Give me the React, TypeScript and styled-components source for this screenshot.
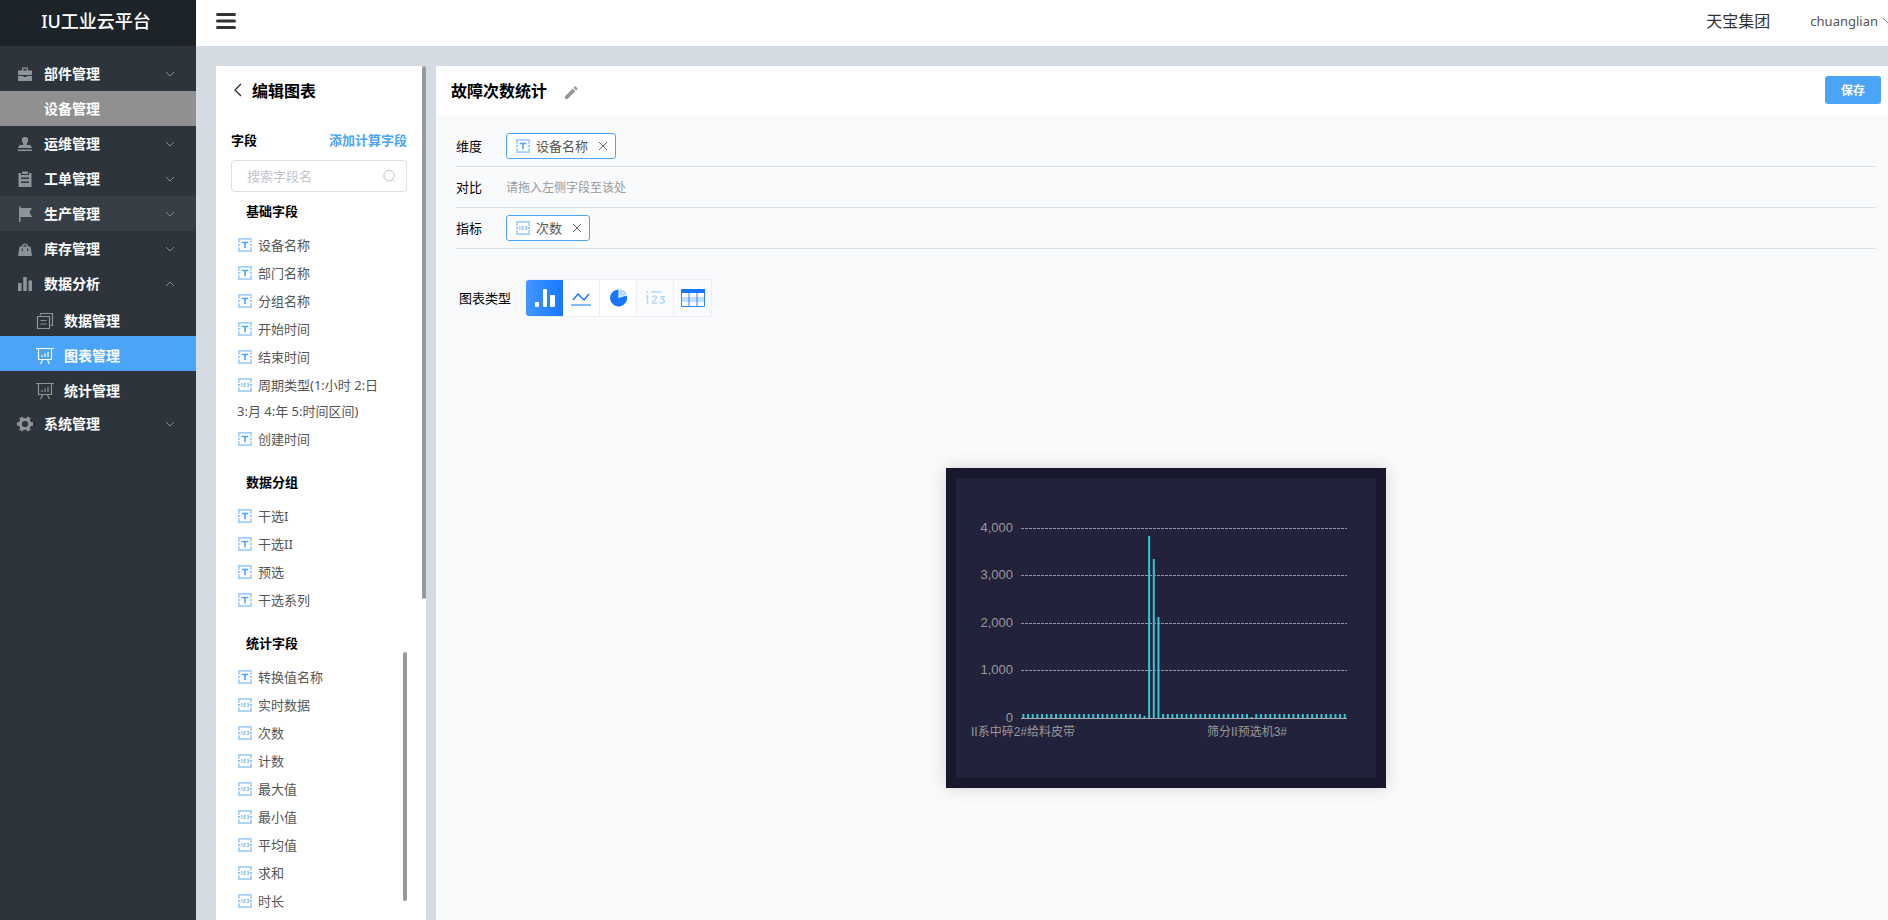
import React from "react";
import styled, { createGlobalStyle, css } from "styled-components";

const Global = createGlobalStyle`
  *, *::before, *::after { box-sizing: border-box; }
  html, body, #root { height: 100%; }
  body {
    margin: 0;
    font-family: "Noto Sans", "Noto Sans CJK SC", sans-serif;
    font-size: 13px;
    color: #333;
    background: #d4dbe3;
    overflow: hidden;
  }
  button, input { font-family: inherit; }
  h1, h2, h3, ul, p { margin: 0; padding: 0; }
  ul { list-style: none; }
`;

const Page = styled.div`
  display: flex;
  height: 100%;
`;

const Sidebar = styled.aside`
  flex: 0 0 196px;
  background: #2d343c;
`;

const Brand = styled.h1`
  height: 46px;
  line-height: 42px;
  padding-right: 4px;
  text-align: center;
  background: #1c2329;
  color: #fff;
  font-size: 18px;
  font-weight: 500;
`;

const Menu = styled.ul`
  && { padding-top: 10px; }
`;

const MenuLink = styled.a<{ $tone?: "grey" | "hover" | "active"; $sub?: boolean }>`
  display: flex;
  align-items: center;
  height: 35px;
  padding: ${(p) => (p.$sub ? "5px 20px 0 36px" : "0 20px 0 17px")};
  color: #fff;
  font-size: 14px;
  font-weight: 600;
  line-height: 20px;
  text-decoration: none;
  background: ${(p) =>
    p.$tone === "grey" ? "#909090" : p.$tone === "hover" ? "#383e46" : p.$tone === "active" ? "#4aa5f9" : "transparent"};
`;

const MenuIcon = styled.svg<{ $sub?: boolean; $bright?: boolean }>`
  flex: none;
  width: ${(p) => (p.$sub ? 18 : 16)}px;
  height: ${(p) => (p.$sub ? 18 : 16)}px;
  margin-right: ${(p) => (p.$sub ? 10 : 11)}px;
  color: ${(p) => (p.$bright ? "#fff" : "#8f939c")};
`;

const MenuText = styled.span`
  flex: 1;
`;

const Chevron = styled.svg`
  flex: none;
  width: 12px;
  height: 12px;
  fill: none;
  stroke: #858a91;
`;

const Content = styled.div`
  flex: 1;
  min-width: 0;
  display: flex;
  flex-direction: column;
`;

const Header = styled.header`
  flex: 0 0 46px;
  display: flex;
  align-items: center;
  padding: 0 0 10px 20px;
  background: #fff;
  overflow: hidden;
`;

const PlainButton = styled.button`
  display: flex;
  align-items: center;
  padding: 0;
  border: 0;
  background: none;
  color: inherit;
`;

const Burger = styled(PlainButton)`
  margin: 6px auto 0 0;
`;

const Company = styled.span`
  font-size: 16px;
  line-height: 20px;
  margin-top: 6px;
`;

const User = styled(PlainButton)`
  flex: none;
  gap: 4px;
  margin: 6px -6px 0 40px;
  font-size: 13px;
  line-height: 20px;
  color: #555;
`;

const Workspace = styled.div`
  flex: 1;
  min-height: 0;
  display: flex;
  gap: 10px;
  padding: 20px 0 0 20px;
`;

const FieldPanel = styled.section`
  position: relative;
  flex: 0 0 210px;
  padding: 0 19px 0 15px;
  background: #fff;
  overflow: hidden;
`;

const ScrollThumb = styled.span<{ $inner?: boolean }>`
  position: absolute;
  width: 4px;
  border-radius: 2px;
  background: #999;
  ${(p) =>
    p.$inner
      ? css`top: 28px; right: 0; height: 249px;`
      : css`top: 0; right: 0; height: 533px;`}
`;

const PanelTitle = styled.h2`
  display: flex;
  align-items: center;
  gap: 9px;
  height: 50px;
  padding: 0 0 2px 2px;
  color: #000;
  font-size: 16px;
  font-weight: 600;
`;

const FieldHead = styled.div`
  display: flex;
  justify-content: space-between;
  margin: 14px 0 10px;
  height: 20px;
  line-height: 20px;
  color: #000;
  font-weight: 600;
`;

const AddLink = styled.a`
  color: #4aa5f9;
  text-decoration: none;
`;

const SearchBox = styled.label`
  display: flex;
  align-items: center;
  height: 32px;
  padding: 0 10px 0 15px;
  border: 1px solid #dcdfe6;
  border-radius: 4px;
`;

const SearchInput = styled.input`
  flex: 1;
  min-width: 0;
  padding: 0;
  border: 0;
  outline: 0;
  font-size: 13px;
  &::placeholder { color: #c0c4cc; opacity: 1; }
`;

const GroupTitle = styled.h3`
  height: 39px;
  padding: 0 0 0 15px;
  line-height: 38px;
  color: #000;
  font-size: 13px;
  font-weight: 600;
`;

const FieldGroup = styled.section`
  position: relative;
  margin-bottom: 10px;
`;

const FieldItem = styled.li`
  padding: 1px 28px 1px 6px;
  line-height: 26px;
  color: #555;
`;

const TypeIcon = styled.svg`
  flex: none;
  width: 16px;
  height: 16px;
  margin-right: 5px;
  vertical-align: -3px;
`;

const Editor = styled.main`
  flex: 1;
  min-width: 0;
  display: flex;
  flex-direction: column;
  background: #f9fafc;
`;

const EditorHead = styled.div`
  flex: 0 0 50px;
  display: flex;
  align-items: center;
  padding: 0 7px 2px 15px;
  background: #fff;
`;

const EditorTitle = styled.h2`
  color: #000;
  font-size: 16px;
  font-weight: 600;
`;

const EditButton = styled(PlainButton)`
  margin: 6px auto 0 17px;
`;

const SaveButton = styled.button`
  width: 56px;
  height: 28px;
  padding: 0;
  border: 0;
  border-radius: 3px;
  background: #4aa5f9;
  color: #fff;
  font-size: 12px;
  font-weight: 600;
`;

const EditorBody = styled.div`
  flex: 1;
  display: flex;
  flex-direction: column;
  padding: 10px 12px 0 20px;
`;

const DropRow = styled.div`
  display: flex;
  align-items: center;
  height: 41px;
  border-bottom: 1px solid #dcdfe2;
`;

const Caption = styled.span`
  padding-bottom: 2px;
`;

const RowLabel = styled(Caption)`
  width: 50px;
  color: #000;
`;

const Tag = styled.span`
  display: flex;
  align-items: center;
  height: 26px;
  padding: 0 7px 0 8px;
  border: 1px solid #4aa5f9;
  border-radius: 3px;
  background: #fff;
  color: #555;
`;

const TagClose = styled(PlainButton)`
  margin-left: 10px;
`;

const Hint = styled.span`
  color: #999;
  font-size: 12px;
`;

const TypeRow = styled.div`
  display: flex;
  align-items: center;
  margin: 30px 0 0 3px;
  color: #000;
`;

const TypeList = styled.div`
  display: flex;
  margin-left: 15px;
  border: 1px solid #eceef1;
  border-left: 0;
  border-radius: 3px;
`;

const TypeButton = styled.button<{ $on?: boolean; $dim?: boolean }>`
  display: flex;
  align-items: center;
  justify-content: center;
  width: 37px;
  height: 36px;
  padding: 0;
  border: 0;
  border-right: 1px solid #eceef1;
  background: ${(p) => (p.$on ? "linear-gradient(90deg, #4296ff, #1677ff)" : p.$dim ? "#fafbfd" : "#fff")};
  &:first-child { border-radius: 3px 0 0 3px; border-right: 0; }
  &:last-child { border-right: 0; }
`;

const Stage = styled.div`
  flex: 1;
  display: flex;
  justify-content: center;
  align-items: flex-start;
  padding-top: 151px;
`;

const ChartCard = styled.figure`
  width: 440px;
  margin: 0;
  border: 10px solid #19172b;
  background: #23223c;
  box-shadow: 0 0 16px rgba(0, 0, 0, 0.16);
`;

const ChartSvg = styled.svg`
  display: block;
  width: 100%;
  height: 300px;
  font-family: "Liberation Sans", "Noto Sans CJK SC", sans-serif;
  font-size: 12px;
`;

const TickText = styled.text`
  font-size: 13px;
  fill: #999;
`;

const icons: Record<string, React.ReactNode> = {
  briefcase: (
    <path fill="currentColor" d="M5 4.500V1.500h6v3h4v4.500H1V4.500zM6.300 4.500h3.400V2.800H6.300zM1 10h5.500v1h3v-1H15v5H1z" />
  ),
  none: null,
  stamp: (
    <path fill="currentColor" d="M8 1a3.200 3.200 0 0 1 3.200 3.200C11.200 6 9.700 6.500 9.700 9H13.500l1.500 3H1l1.500-3h3.800C6.300 6.500 4.800 6 4.800 4.200A3.200 3.200 0 0 1 8 1zM1 13.500h14V15H1z" />
  ),
  clipboard: (
    <path fill="currentColor" fillRule="evenodd" d="M1.500 2h2.500v2h8V2h2.500v14h-13zM5 0.500h6V3H5zM4 6.500h8V8H4zM4 10.500h8V12H4z" />
  ),
  flag: <path fill="currentColor" d="M2 0.500h1.500V2H15l-2.500 4.200L15 11H3.500V16H2z" />,
  bag: (
    <path fill="currentColor" fillRule="evenodd" d="M2.500 5.500H4.700A3.500 4.500 0 0 1 11.300 5.500h2.200L15 15H1zM6 5.500h4A2.200 3 0 0 0 6 5.500zM4.700 7.500v2.200h1.300V7.500zM10 7.500v2.200h1.300V7.500z" />
  ),
  bars: <path fill="currentColor" d="M1 7h3.500v8H1zM6.200 1h3.600v14H6.200zM11.500 4.500H15V15h-3.500z" />,
  docs: (
    <path fill="none" stroke="currentColor" strokeWidth="1.200" d="M4.500 3.500V1.500h12v12h-2M1.500 4.500h12v12h-12zM4.500 8.500h6M4.500 12h6" />
  ),
  board: (
    <path fill="none" stroke="currentColor" strokeWidth="1.200" d="M0 1.500h18M2.500 1.500v11h13v-11M6.500 13L4.500 17M11.500 13l2 4M6 10V8M9 10V6.500M12 10V5" />
  ),
  gear: (
    <path
      fill="currentColor"
      fillRule="evenodd"
      transform="rotate(90 8 8)"
      d="M6.300 0h3.400l.4 2.200 1.500.9 2.100-.8 1.700 3L13.700 6.800v2.400l1.700 1.500-1.700 3-2.100-.8-1.500.9-.4 2.200H6.300l-.4-2.200-1.500-.9-2.100.8-1.700-3 1.700-1.500V6.800L.6 5.300l1.700-3 2.100.8 1.500-.9zM8 4.900a3.100 3.100 0 1 0 0 6.200 3.100 3.100 0 0 0 0-6.200z"
    />
  ),
};

type Entry = { text: string; icon: string; tone?: "grey" | "hover" | "active"; sub?: boolean; arrow?: "up" | "down" };

const entries: Entry[] = [
  { text: "部件管理", icon: "briefcase", arrow: "down" },
  { text: "设备管理", icon: "none", tone: "grey" },
  { text: "运维管理", icon: "stamp", arrow: "down" },
  { text: "工单管理", icon: "clipboard", arrow: "down" },
  { text: "生产管理", icon: "flag", tone: "hover", arrow: "down" },
  { text: "库存管理", icon: "bag", arrow: "down" },
  { text: "数据分析", icon: "bars", arrow: "up" },
  { text: "数据管理", icon: "docs", sub: true },
  { text: "图表管理", icon: "board", sub: true, tone: "active" },
  { text: "统计管理", icon: "board", sub: true },
  { text: "系统管理", icon: "gear", arrow: "down" },
];

type Field = { text: string; num?: boolean };

const groups: { title: string; fields: Field[] }[] = [
  {
    title: "基础字段",
    fields: [
      { text: "设备名称" },
      { text: "部门名称" },
      { text: "分组名称" },
      { text: "开始时间" },
      { text: "结束时间" },
      { text: "周期类型(1:小时 2:日 3:月 4:年 5:时间区间)", num: true },
      { text: "创建时间" },
    ],
  },
  { title: "数据分组", fields: [{ text: "干选I" }, { text: "干选II" }, { text: "预选" }, { text: "干选系列" }] },
  {
    title: "统计字段",
    fields: [
      { text: "转换值名称" },
      { text: "实时数据", num: true },
      { text: "次数", num: true },
      { text: "计数", num: true },
      { text: "最大值", num: true },
      { text: "最小值", num: true },
      { text: "平均值", num: true },
      { text: "求和", num: true },
      { text: "时长", num: true },
    ],
  },
];

const FieldType = ({ num }: { num?: boolean }) => (
  <TypeIcon viewBox="0 0 16 16" fill="none" aria-hidden="true">
    <path stroke="#a3d1fc" strokeWidth="1.700" d="M1.900 5.800v-3.900h12.200v3.900M1.900 10.200v3.900h12.200v-3.900" />
    {num ? (
      <>
        <path stroke="#6db7fa" strokeWidth="1.400" d="M1 8h2.200M12.800 8h2.200" />
        <path
          stroke="#6db7fa"
          strokeWidth="0.800"
          d="M4.200 6.500l.7-.4v3.800M6.500 6.400h1.800v1.500H6.700v1.600h1.900M10 6.400h1.700v3.100H10M10.300 7.900h1.400"
        />
      </>
    ) : (
      <>
        <path stroke="#7dbffb" strokeWidth="1.400" d="M1 8h2.200M12.800 8h2.200" />
        <path stroke="#4aa5f9" strokeWidth="1.600" d="M4.700 5.500h6.600M8 5.500v5.700" />
      </>
    )}
  </TypeIcon>
);

const Cross = () => (
  <svg width="10" height="10" viewBox="0 0 10 10" stroke="#666" aria-hidden="true">
    <path d="M1 1l8 8M9 1l-8 8" />
  </svg>
);

const BASE = 240;
const LEFT = 65;
const RIGHT = 391;
const ticks = [
  { label: "4,000", y: 50 },
  { label: "3,000", y: 97 },
  { label: "2,000", y: 145 },
  { label: "1,000", y: 192 },
];
const heights = Array.from({ length: 70 }, (_, i) => {
  if (i === 26) return 2;
  if (i === 27) return 182;
  if (i === 28) return 159;
  if (i === 29) return 101;
  if (i === 49) return 1;
  return 4;
});
const STEP = (RIGHT - LEFT) / heights.length;

const Chart = () => (
  <ChartSvg viewBox="0 0 420 300" role="img" aria-label="故障次数统计">
    {ticks.map((t) => (
      <g key={t.label}>
        <line x1={LEFT} x2={RIGHT} y1={t.y + 0.5} y2={t.y + 0.5} stroke="#93939a" strokeDasharray="3 1" />
        <TickText x={57} y={t.y + 4} textAnchor="end">{t.label}</TickText>
      </g>
    ))}
    <TickText x={57} y={BASE + 4} textAnchor="end">0</TickText>
    {heights.map((h, i) => (
      <rect key={i} x={LEFT + STEP * i + 1.400} y={BASE - h} width={2} height={h} fill="#36c5d3" />
    ))}
    <line x1={LEFT} x2={RIGHT} y1={BASE + 0.5} y2={BASE + 0.5} stroke="#aaa" />
    <text x={67} y={258} textAnchor="middle" fill="#999">II系中碎2#给料皮带</text>
    <text x={291} y={258} textAnchor="middle" fill="#999">筛分II预选机3#</text>
  </ChartSvg>
);

export default function App() {
  return (
    <>
      <Global />
      <Page>
        <Sidebar>
          <Brand>IU工业云平台</Brand>
          <nav>
            <Menu>
              {entries.map((e) => (
                <li key={e.text}>
                  <MenuLink href="#" $tone={e.tone} $sub={e.sub}>
                    <MenuIcon viewBox={e.sub ? "0 0 18 18" : "0 0 16 16"} $sub={e.sub} $bright={e.tone === "active"}>
                      {icons[e.icon]}
                    </MenuIcon>
                    <MenuText>{e.text}</MenuText>
                    {e.arrow && (
                      <Chevron viewBox="0 0 12 12">
                        <path d={e.arrow === "down" ? "M2 4l4 4 4-4" : "M2 8l4-4 4 4"} />
                      </Chevron>
                    )}
                  </MenuLink>
                </li>
              ))}
            </Menu>
          </nav>
        </Sidebar>
        <Content>
          <Header>
            <Burger aria-label="菜单">
              <svg width="20" height="18" viewBox="0 0 20 18" stroke="#333" strokeWidth="3" strokeLinecap="round">
                <path d="M1.500 2.500h17M1.500 9h17M1.500 15.500h17" />
              </svg>
            </Burger>
            <Company>天宝集团</Company>
            <User>
              chuanglian
              <Chevron viewBox="0 0 12 12"><path d="M1 3l5 5 5-5" /></Chevron>
            </User>
          </Header>
          <Workspace>
            <FieldPanel>
              <PanelTitle>
                <PlainButton aria-label="返回">
                  <svg width="10" height="14" viewBox="0 0 10 14" fill="none" stroke="#222" strokeWidth="1.200">
                    <path d="M8 1L2 7l6 6" />
                  </svg>
                </PlainButton>
                编辑图表
              </PanelTitle>
              <FieldHead>
                <span>字段</span>
                <AddLink href="#">添加计算字段</AddLink>
              </FieldHead>
              <SearchBox>
                <SearchInput placeholder="搜索字段名" aria-label="搜索字段名" />
                <svg width="14" height="14" viewBox="0 0 14 14" fill="none" stroke="#c0c4cc">
                  <circle cx="7" cy="6.500" r="5.200" />
                  <path d="M10.500 10.500l2 2" />
                </svg>
              </SearchBox>
              {groups.map((g, i) => (
                <FieldGroup key={g.title}>
                  <GroupTitle>{g.title}</GroupTitle>
                  <ul>
                    {g.fields.map((f) => (
                      <FieldItem key={f.text}>
                        <FieldType num={f.num} />
                        {f.text}
                      </FieldItem>
                    ))}
                  </ul>
                  {i === 2 && <ScrollThumb $inner />}
                </FieldGroup>
              ))}
              <ScrollThumb />
            </FieldPanel>
            <Editor>
              <EditorHead>
                <EditorTitle>故障次数统计</EditorTitle>
                <EditButton aria-label="编辑名称">
                  <svg width="14" height="14" viewBox="0 0 14 14" fill="#999">
                    <path d="M1 10.300L8.700 2.600l2.700 2.700L3.700 13H1zM9.500 1.800L10.700.6a.8.8 0 0 1 1.100 0l1.600 1.600a.8.8 0 0 1 0 1.100L12.200 4.500z" />
                  </svg>
                </EditButton>
                <SaveButton>保存</SaveButton>
              </EditorHead>
              <EditorBody>
                <DropRow>
                  <RowLabel>维度</RowLabel>
                  <Tag>
                    <FieldType />
                    <Caption>设备名称</Caption>
                    <TagClose aria-label="移除设备名称"><Cross /></TagClose>
                  </Tag>
                </DropRow>
                <DropRow>
                  <RowLabel>对比</RowLabel>
                  <Hint>请拖入左侧字段至该处</Hint>
                </DropRow>
                <DropRow>
                  <RowLabel>指标</RowLabel>
                  <Tag>
                    <FieldType num />
                    <Caption>次数</Caption>
                    <TagClose aria-label="移除次数"><Cross /></TagClose>
                  </Tag>
                </DropRow>
                <TypeRow>
                  <Caption>图表类型</Caption>
                  <TypeList>
                    <TypeButton $on aria-label="柱状图">
                      <svg width="20" height="18" viewBox="0 0 20 18" fill="#fff">
                        <rect y="13" width="4" height="5" rx="1" />
                        <rect x="8" width="4" height="18" rx="1" />
                        <rect x="15" y="6" width="5" height="12" rx="1" />
                      </svg>
                    </TypeButton>
                    <TypeButton aria-label="折线图">
                      <svg width="20" height="16" viewBox="0 0 20 16" fill="none" stroke="#1677ff" strokeWidth="1.500">
                        <path d="M2 10l5-6 6 6 5-6" />
                        <path d="M0 15h20" opacity="0.700" />
                      </svg>
                    </TypeButton>
                    <TypeButton aria-label="饼图">
                      <svg width="18" height="18" viewBox="0 0 18 18">
                        <path fill="#1677ff" d="M9.500 0.500v8.500l8.200-2.500A8.500 8.500 0 1 1 9.500 0.500z" />
                        <path fill="#b9d7ff" d="M10.500 0a8.500 8.500 0 0 1 7.200 5.500L10.500 8z" />
                      </svg>
                    </TypeButton>
                    <TypeButton $dim aria-label="指标卡">
                      <svg width="20" height="14" viewBox="0 0 20 14" fill="none" stroke="#b9d7f8" strokeWidth="1.500">
                        <path d="M1 1h2M6 1h10M1 6l1.500-1V13M7.500 6.500c0-2 4-2 4 0 0 1.500-4 4-4 5.700h4.500M15 5.700h4l-2 2.500c3 0 3 4-.5 4-1 0-1.700-.5-2-1.200" />
                      </svg>
                    </TypeButton>
                    <TypeButton $dim aria-label="表格">
                      <svg width="24" height="18" viewBox="0 0 24 18">
                        <path fill="#fff" d="M0 0h24v18H0z" />
                        <path fill="#c5deff" d="M1 8h22v5H1z" />
                        <path fill="none" stroke="#2f86ff" d="M0.500 4v13.500h23V4M8 4v13M16 4v13" />
                        <path fill="#1677ff" d="M0 0h24v4H0z" />
                      </svg>
                    </TypeButton>
                  </TypeList>
                </TypeRow>
                <Stage>
                  <ChartCard>
                    <Chart />
                  </ChartCard>
                </Stage>
              </EditorBody>
            </Editor>
          </Workspace>
        </Content>
      </Page>
    </>
  );
}
